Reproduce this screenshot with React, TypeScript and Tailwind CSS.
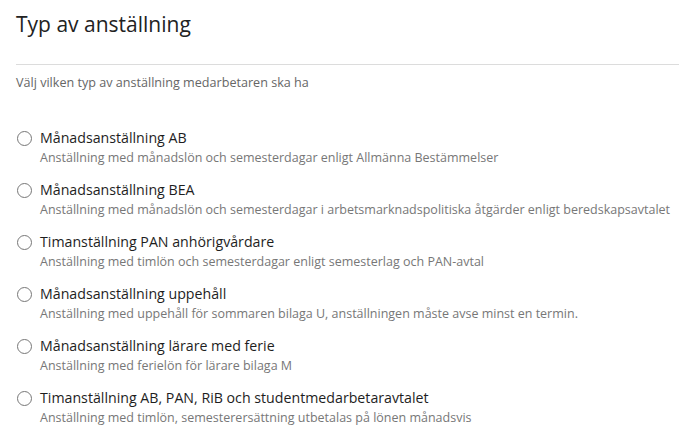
import React from 'react';

const options = [
	{
		title: 'Månadsanställning AB',
		desc: 'Anställning med månadslön och semesterdagar enligt Allmänna Bestämmelser',
	},
	{
		title: 'Månadsanställning BEA',
		desc: 'Anställning med månadslön och semesterdagar i arbetsmarknadspolitiska åtgärder enligt beredskapsavtalet',
	},
	{
		title: 'Timanställning PAN anhörigvårdare',
		desc: 'Anställning med timlön och semesterdagar enligt semesterlag och PAN-avtal',
	},
	{
		title: 'Månadsanställning uppehåll',
		desc: 'Anställning med uppehåll för sommaren bilaga U, anställningen måste avse minst en termin.',
	},
	{
		title: 'Månadsanställning lärare med ferie',
		desc: 'Anställning med ferielön för lärare bilaga M',
	},
	{
		title: 'Timanställning AB, PAN, RiB och studentmedarbetaravtalet',
		desc: 'Anställning med timlön, semesterersättning utbetalas på lönen månadsvis',
	},
];

const App = () => {
	return (
		<div className="min-h-screen bg-white pl-4 font-['Open_Sans',sans-serif]">
			<h1 className="pt-[9px] text-[21px] leading-[30px] text-[#222]">Typ av anställning</h1>
			<div className="mt-[25px] border-t border-[#dcdcdc]" />
			<p className="mt-[9px] text-[12.6px] leading-[18px] text-[#666]">
				Välj vilken typ av anställning medarbetaren ska ha
			</p>
			<div className="mt-[36px] flex flex-col gap-[12px]">
				{options.map((o) => (
					<label key={o.title} className="flex items-start gap-[8px] cursor-pointer">
						<input type="radio" name="typ" className="sr-only" />
						<span className="mt-[3px] ml-px h-[15px] w-[15px] shrink-0 rounded-full border border-[#777] bg-white" />
						<span className="flex flex-col whitespace-nowrap">
							<span className="text-[14.2px] leading-[20px] text-[#1e1e1e]">{o.title}</span>
							<span className="text-[12.5px] leading-[20px] text-[#777]">{o.desc}</span>
						</span>
					</label>
				))}
			</div>
		</div>
	);
};

export default App;
